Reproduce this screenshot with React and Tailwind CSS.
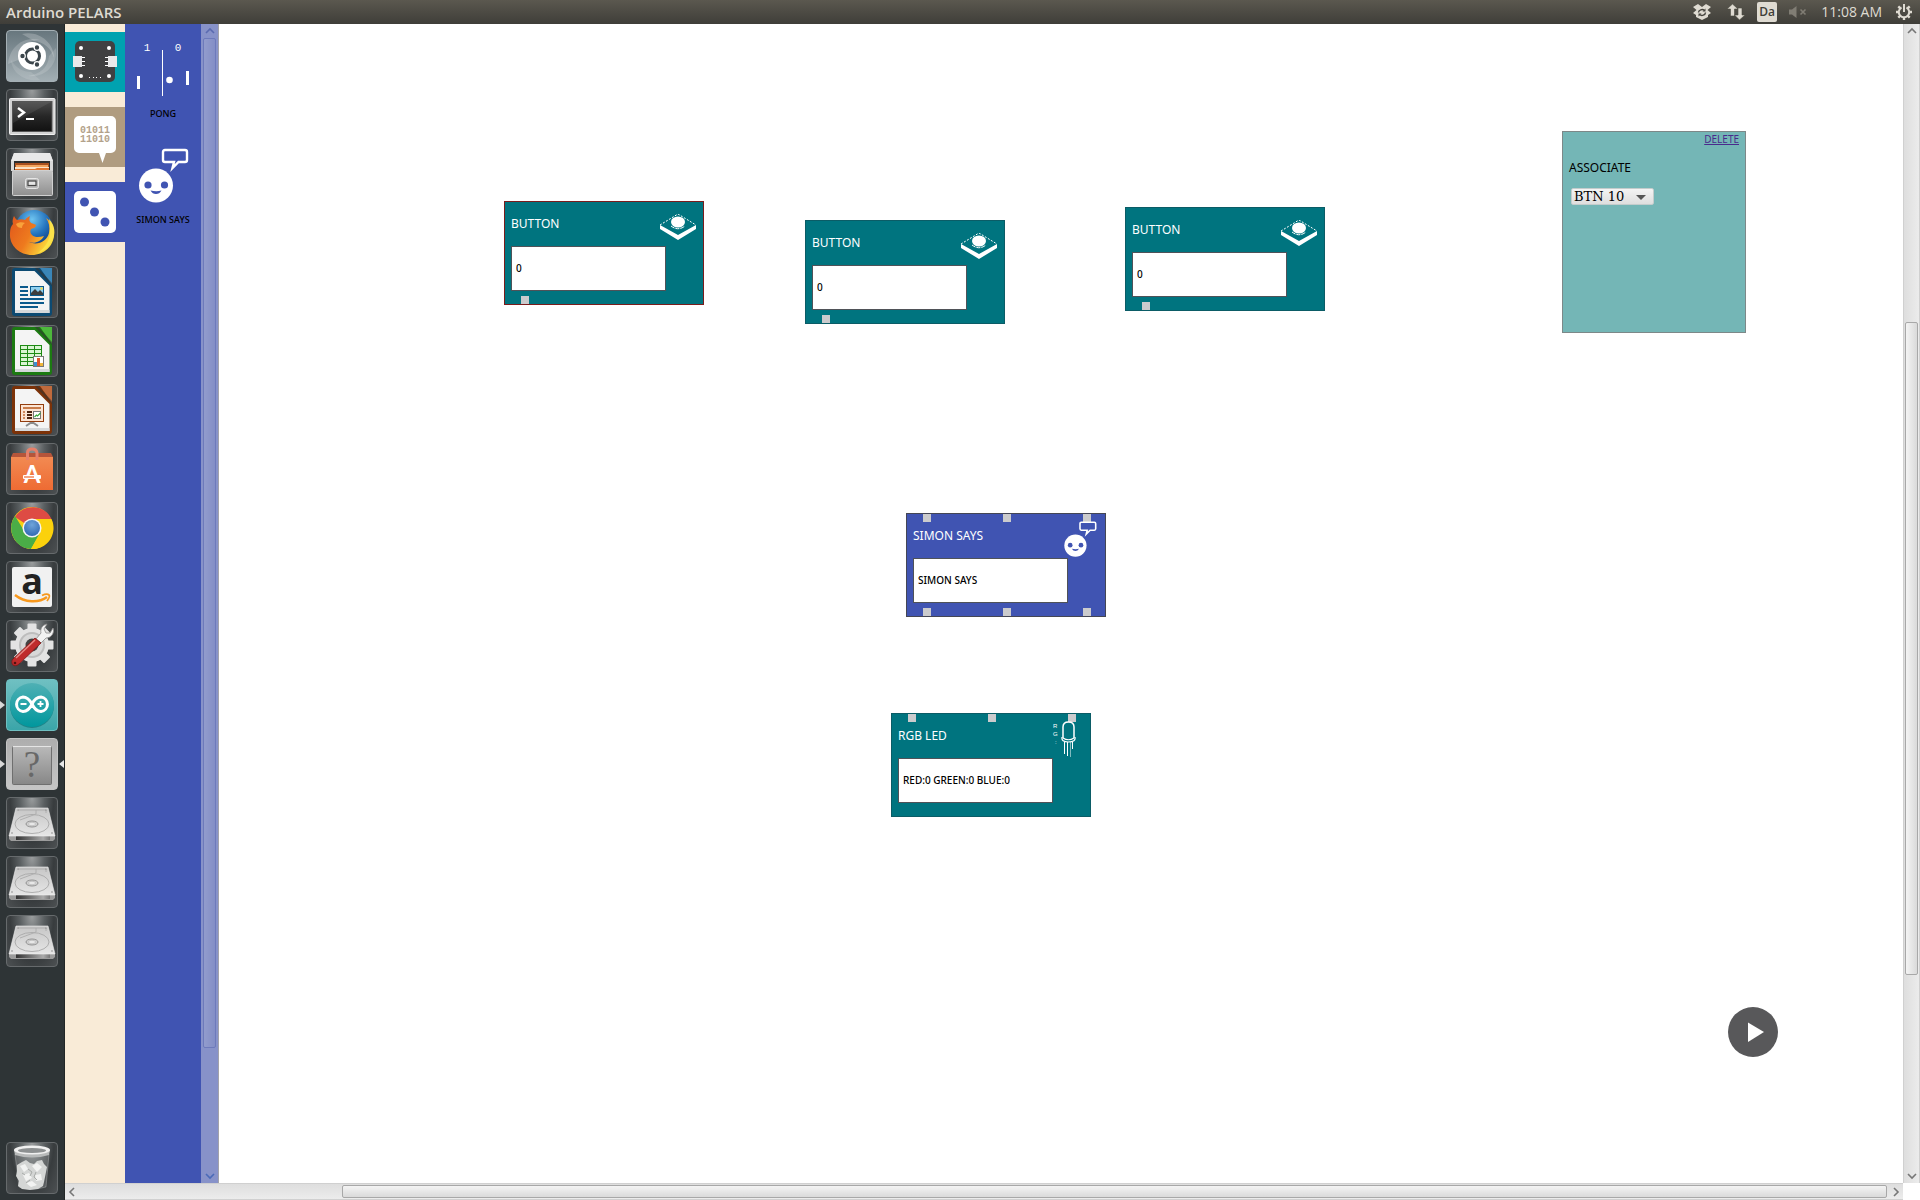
import React from "react";

/* ---------- Launcher icons (52 x 52) ---------- */

const Svg = ({ children, ...rest }) => (
  <svg viewBox="0 0 52 52" className="block h-full w-full" aria-hidden="true" {...rest}>
    {children}
  </svg>
);

const DashIcon = () => (
  <Svg>
    <path d="M2 34C4 16 18 6 34 10c-12 0-22 8-22 20" fill="#ffffff30" />
    <path d="M16 4c16-4 32 8 32 24-3-10-10-16-20-17" fill="#ffffff38" />
    <path d="M50 18c2 18-12 30-28 28 12-2 20-8 21-20" fill="#ffffff28" />
    <path d="M34 50C20 52 6 44 5 30c5 8 12 12 20 12" fill="#ffffff20" />
    <circle cx="26" cy="26" r="14" fill="#fff" />
    <circle cx="26.5" cy="26" r="7" fill="none" stroke="#3b454b" strokeWidth="3" />
    <g fill="#3b454b" stroke="#fff" strokeWidth="1.2">
      <circle cx="16.5" cy="26" r="2.8" />
      <circle cx="31" cy="17.5" r="2.8" />
      <circle cx="31" cy="34.5" r="2.8" />
    </g>
  </Svg>
);

const TerminalIcon = () => (
  <Svg>
    <defs>
      <linearGradient id="term" x1="0" y1="0" x2="0" y2="1">
        <stop offset="0" stopColor="#4a4a4a" />
        <stop offset=".5" stopColor="#262626" />
        <stop offset="1" stopColor="#111" />
      </linearGradient>
    </defs>
    <rect x="3.5" y="9.5" width="45.5" height="36" rx="1" fill="#d2d2d2" stroke="#f0f0f0" />
    <rect x="6.5" y="12.5" width="39.5" height="30" fill="url(#term)" stroke="#555" />
    <path d="M7 13h38L7 34z" fill="#ffffff14" />
    <path d="M12 19l6 4.5-6 4.5" fill="none" stroke="#fff" strokeWidth="2.4" />
    <path d="M20 30h8" stroke="#fff" strokeWidth="2" />
  </Svg>
);

const FilesIcon = () => (
  <Svg>
    <defs>
      <linearGradient id="cab" x1="0" y1="0" x2="0" y2="1">
        <stop offset="0" stopColor="#c4c4c4" />
        <stop offset="1" stopColor="#8f8f8f" />
      </linearGradient>
    </defs>
    <path d="M8 5h36l3 8v10H5V13z" fill="#d9d9d9" />
    <path d="M8 5h36l3 8H5z" fill="#e9e9e9" />
    <rect x="8" y="13" width="36" height="10" fill="#2e2e2e" />
    <path d="M9 15h34v8H9z" fill="#a8501f" />
    <path d="M10 17h32v6H10z" fill="#f3a55f" />
    <path d="M9 19h34v3H9z" fill="#fbe3c8" />
    <path d="M9 21h20l2-1h12v5H9z" fill="#e2762f" />
    <rect x="6.5" y="22.5" width="40" height="25" rx="1" fill="url(#cab)" stroke="#d0d0d0" />
    <rect x="19.5" y="30.5" width="13" height="10" rx="2" fill="#b9b9b9" stroke="#e6e6e6" />
    <rect x="22" y="33" width="8" height="4.5" fill="#e6e6e6" stroke="#444" strokeWidth="1.2" />
  </Svg>
);

const FirefoxIcon = () => (
  <Svg>
    <defs>
      <radialGradient id="globe" cx=".45" cy=".25" r=".8">
        <stop offset="0" stopColor="#6ec4f0" />
        <stop offset=".5" stopColor="#2372bd" />
        <stop offset="1" stopColor="#0c2c6e" />
      </radialGradient>
      <linearGradient id="fox" x1="0" y1="0" x2="1" y2=".5">
        <stop offset="0" stopColor="#e0561c" />
        <stop offset=".55" stopColor="#ee7a1e" />
        <stop offset="1" stopColor="#fbdc3c" />
      </linearGradient>
    </defs>
    <circle cx="28" cy="22" r="19" fill="url(#globe)" />
    <path
      d="M8 9c1 2 2 3 3 4 3-1 6-1 8 0 1-2 3-3 5-4-1 3-1 5 1 7 2 1 4 1 5 2 0 2-2 3-5 4-1 2-1 4 1 6 3 3 8 2 12 1-3 6-10 8-15 6 9 4 18-1 20-9 1-6 0-11-3-15 6 4 8 9 8 16 0 12-10 21-22 21S3 39 4 26c0-4 1-7 3-9-1-3 0-6 1-8z"
      fill="url(#fox)"
    />
    <path d="M43 12c6 6 7 15 3 22-3 6-8 10-14 12 9-7 12-14 12-22 0-4 0-8-1-12z" fill="#fbe24a" />
    <path d="M10 17c3-2 6-2 9-1-2 1-3 3-3 5-3 0-5-1-6-4z" fill="#f9a23a" />
  </Svg>
);

const DocumentIcon = ({ dark, mid, children }) => (
  <Svg>
    <path d="M9 2h37v45a3 3 0 0 1-3 3H9a3 3 0 0 1-3-3V5a3 3 0 0 1 3-3z" fill={dark} />
    <path d="M34 2h12v17z" fill={mid} />
    <path d="M29 2l17 18v-3L32 2z" fill="#333" opacity=".55" />
    <path d="M9 5h19.5L43.500 20v27H9z" fill="#f4f4f4" />
    <path d="M9 44h34.5v3H9z" fill="#d5d8da" />
    {children}
  </Svg>
);

const WriterIcon = () => (
  <DocumentIcon dark="#0c4a72" mid="#3a86b8">
    <g fill="#0b5a8c">
      <path d="M14 20h8v2h-8zM14 24h8v2h-8zM14 28h8v2h-8zM14 32h24v2H14zM14 36h24v2H14zM14 40h18v2H14z" />
    </g>
    <rect x="24.5" y="20.5" width="13" height="9" fill="#8fd0f0" stroke="#0b5a8c" />
    <path d="M25 29v-2l4-4 3 3 2-2 3 3v2z" fill="#3d3d3d" />
    <circle cx="35.5" cy="22.5" r="1.2" fill="#f5d742" />
  </DocumentIcon>
);

const CalcIcon = () => (
  <DocumentIcon dark="#1c7a12" mid="#4db83c">
    <rect x="14" y="20" width="22" height="21" fill="#1d8a14" />
    <g fill="#d9f5d2">
      <path d="M15 21h6v3h-6zM22 21h6v3h-6zM29 21h6v3h-6zM15 25h6v3h-6zM22 25h6v3h-6zM29 25h6v3h-6zM15 29h6v3h-6zM22 29h6v3h-6zM29 29h6v3h-6zM15 33h6v3h-6zM22 33h6v3h-6zM15 37h6v3h-6zM22 37h6v3h-6z" />
    </g>
    <rect x="27.5" y="31.5" width="10" height="10" fill="#fff" stroke="#777" />
    <path d="M28 37h3v4h-3z" fill="#3d8fd1" />
    <path d="M31 33h3v8h-3z" fill="#e0562c" />
    <path d="M34 38h3v3h-3z" fill="#f0b73a" />
  </DocumentIcon>
);

const ImpressIcon = () => (
  <DocumentIcon dark="#7c3208" mid="#c06a3c">
    <path d="M26 38v2M20 42l6-4 6 4" fill="none" stroke="#8b8b8b" strokeWidth="2" />
    <rect x="14.5" y="20.5" width="23" height="17" fill="#fbe4d4" stroke="#933d0e" />
    <path d="M17 23h18v2H17z" fill="#c87b4a" />
    <path d="M17 27h2v2h-2zM17 30h2v2h-2zM17 33h2v2h-2z" fill="#d08a5e" />
    <path d="M21 27h5v2h-5zM21 30h5v2h-5zM21 33h5v2h-5z" fill="#4c2410" />
    <rect x="27.5" y="27.5" width="7" height="7" fill="#fff" stroke="#777" />
    <path d="M28.5 33l2-2 1 1 3-3" fill="none" stroke="#37a53a" strokeWidth="1.2" />
  </DocumentIcon>
);

const SoftwareIcon = () => (
  <Svg>
    <defs>
      <linearGradient id="bag" x1="0" y1="0" x2="0" y2="1">
        <stop offset="0" stopColor="#f28a52" />
        <stop offset="1" stopColor="#ee6b33" />
      </linearGradient>
    </defs>
    <path d="M7 10h38l2 4H5z" fill="#b5553a" />
    <path d="M5 14h42v33H5z" fill="url(#bag)" />
    <path d="M21.5 17V10q0-4 4.500-4t5 4v7" fill="none" stroke="#e5806a" strokeWidth="3" />
    <rect x="17" y="32" width="18" height="4" rx="1" fill="#fff" />
    <text x="26" y="40" textAnchor="middle" fontSize="24" fontWeight="700" fontFamily="Lato, sans-serif" fill="#fff">A</text>
    <path d="M18 34h10" stroke="#ee6b33" strokeWidth="1.2" />
  </Svg>
);

const ChromeIcon = () => (
  <Svg>
    <defs>
      <radialGradient id="chromeBlue" cx=".5" cy=".3" r=".8">
        <stop offset="0" stopColor="#6fa4da" />
        <stop offset="1" stopColor="#2a62ad" />
      </radialGradient>
    </defs>
    <circle cx="26" cy="26" r="21" fill="#f9cf12" />
    <path d="M26 26L9 15A21 21 0 0 1 45.500 17H26z" fill="#de4b44" />
    <path d="M9 14A21 21 0 0 0 25 47l9-16-8-5-9 1z" fill="#4aad47" />
    <path d="M26 17h19.5A21 21 0 0 1 25 47l9-16z" fill="#fbd10c" />
    <circle cx="26" cy="26" r="9.5" fill="#f4f4f4" />
    <circle cx="26" cy="26" r="8" fill="url(#chromeBlue)" />
  </Svg>
);

const AmazonIcon = () => (
  <Svg>
    <rect x="6" y="6" width="40" height="40" rx="2" fill="#f1f1f1" />
    <text x="26" y="33" textAnchor="middle" fontSize="36" fontWeight="700" fontFamily="Open Sans, sans-serif" fill="#222">a</text>
    <path d="M9 34c10 8 24 8 32 2" fill="none" stroke="#f7981d" strokeWidth="2.4" />
    <path d="M36 34.5c3-1.500 6-1.500 7-.5s-.5 4-2 6" fill="none" stroke="#f7981d" strokeWidth="1.8" />
  </Svg>
);

const SettingsIcon = () => (
  <Svg>
    <g fill="#e3e3e3">
      <circle cx="26" cy="25" r="17" />
      {[0, 45, 90, 135].map((a) => (
        <rect key={a} x="21.5" y="3.5" width="9" height="43" rx="1" transform={`rotate(${a} 26 25)`} />
      ))}
    </g>
    <circle cx="26" cy="25" r="13" fill="#bdbdbd" />
    <circle cx="26" cy="25" r="11" fill="#d8d8d8" />
    <circle cx="26" cy="25" r="6.5" fill="#444" />
    <path
      d="M30 19l5-6c-1-4 1-8 6-9l-3 5 2 4 4 0 3-5c2 5-2 10-7 10l-5 5z"
      fill="#f2f2f2"
      stroke="#8a8a8a"
      strokeWidth=".8"
    />
    <path d="M29 18l6 5L13 44c-2 2-5 2-6 1s-2-4 0-6z" fill="#bf2c2c" stroke="#7c1515" strokeWidth=".8" />
    <path d="M29 20L10 38" stroke="#e58a85" strokeWidth="1.5" />
    <circle cx="9" cy="43" r="1.3" fill="#501010" />
  </Svg>
);

const ArduinoIcon = () => (
  <Svg>
    <defs>
      <linearGradient id="ard" x1="0" y1="0" x2="0" y2="1">
        <stop offset="0" stopColor="#4fb0b4" />
        <stop offset="1" stopColor="#00979d" />
      </linearGradient>
    </defs>
    <circle cx="26" cy="27" r="22" fill="#0a6a70" opacity=".6" />
    <circle cx="26" cy="26" r="22" fill="url(#ard)" />
    <path d="M26 25c-4-7-7-7-9-7a7.3 7.300 0 0 0 0 14.500c3 0 6-1 9-7.500 3-6 6-7 9-7a7.300 7.300 0 0 1 0 14.500c-3 0-6-1-9-7.500z" fill="none" stroke="#fff" strokeWidth="3" />
    <path d="M14.5 25h6M31.500 25h6M34.500 22v6" stroke="#fff" strokeWidth="1.8" />
  </Svg>
);

const UnknownIcon = () => (
  <Svg>
    <defs>
      <linearGradient id="unk" x1="0" y1="0" x2="0" y2="1">
        <stop offset="0" stopColor="#b9b9b9" />
        <stop offset="1" stopColor="#878787" />
      </linearGradient>
    </defs>
    <rect x="6.5" y="8.5" width="39" height="38" rx="1" fill="url(#unk)" stroke="#6f6f6f" />
    <path d="M7 8.5h38" stroke="#e5e5e5" />
    <text x="26" y="39" textAnchor="middle" fontSize="37" fontFamily="Liberation Serif, serif" fill="#686868">?</text>
  </Svg>
);

const DiskIcon = () => (
  <Svg>
    <defs>
      <linearGradient id="disk" x1="0" y1="0" x2="0" y2="1">
        <stop offset="0" stopColor="#c6c6c6" />
        <stop offset="1" stopColor="#e6e6e6" />
      </linearGradient>
      <linearGradient id="diskFront" x1="0" y1="0" x2="1" y2="0">
        <stop offset="0" stopColor="#333" />
        <stop offset=".8" stopColor="#aaa" />
        <stop offset="1" stopColor="#777" />
      </linearGradient>
    </defs>
    <path d="M3 38h46v4l-2 2H5l-2-2z" fill="#9c9c9c" />
    <path d="M10 39h34v4H10z" fill="url(#diskFront)" />
    <path d="M10 11h32l7 28H3z" fill="url(#disk)" stroke="#f0f0f0" strokeWidth=".6" />
    <ellipse cx="26" cy="27" rx="17" ry="9.5" fill="none" stroke="#a8a8a8" strokeWidth=".9" />
    <path d="M12 13h18v4l-16 6M30 13h10v3" fill="none" stroke="#acacac" strokeWidth=".9" />
    <ellipse cx="26" cy="27" rx="6" ry="3" fill="#d0d0d0" stroke="#8a8a8a" strokeWidth=".9" />
    <ellipse cx="26" cy="27" rx="3.5" ry="1.7" fill="#e8e8e8" stroke="#aaa" strokeWidth=".5" />
    <g fill="#777">
      <circle cx="12" cy="13" r=".6" /><circle cx="40" cy="13" r=".6" />
      <circle cx="6" cy="36" r=".7" /><circle cx="46" cy="36" r=".7" />
    </g>
  </Svg>
);

const TrashIcon = () => (
  <Svg>
    <path d="M9 12h34l-3 33q-14 4-27 0z" fill="#ffffff26" stroke="#ffffff50" strokeWidth=".8" />
    <path
      d="M11 23l5-3 4-2 4 3 4 1 3-3 5-1 2 4 3 3-1 5-1 5-1 5-1 4-5 3-8 1-8-1-4-3 1-5-3-5 1-5z"
      fill="#d4d6d5"
    />
    <path d="M14 24l5-2 3 5-4 3zM26 24l5-3 5 4-5 5zM17 33l6-2 3 5-6 3zM29 33l6-1 1 6-6 1zM20 41l6-2 5 4-6 2z" fill="#f2f3f2" />
    <path d="M22 27l4 3-2 4M30 30l-2 5 3 3M16 31l3 2M24 38l-4 3" fill="none" stroke="#a1a5a3" strokeWidth=".9" />
    <path d="M8 8l1 5q17 5 34 0l1-5z" fill="#b8baba" />
    <ellipse cx="26" cy="8" rx="18" ry="4.5" fill="#f0f0f0" />
    <ellipse cx="26" cy="8.5" rx="14" ry="2.5" fill="#8d9091" />
  </Svg>
);

const LAUNCHERS = [
  { name: "Dash", Icon: DashIcon, tone: "dash" },
  { name: "Terminal", Icon: TerminalIcon },
  { name: "Files", Icon: FilesIcon },
  { name: "Firefox", Icon: FirefoxIcon },
  { name: "Writer", Icon: WriterIcon },
  { name: "Calc", Icon: CalcIcon },
  { name: "Impress", Icon: ImpressIcon },
  { name: "Software Center", Icon: SoftwareIcon },
  { name: "Chrome", Icon: ChromeIcon },
  { name: "Amazon", Icon: AmazonIcon },
  { name: "Settings", Icon: SettingsIcon },
  { name: "Arduino", Icon: ArduinoIcon, tone: "teal", running: true },
  { name: "PELARS", Icon: UnknownIcon, tone: "light", running: true, focused: true },
  { name: "Disk 1", Icon: DiskIcon },
  { name: "Disk 2", Icon: DiskIcon },
  { name: "Disk 3", Icon: DiskIcon },
];

const TONES = {
  dash: "bg-linear-to-b from-[#68777e] to-[#a3afb4] border-[#a5b0b5]",
  teal: "bg-linear-to-b from-[#6fc0c2] to-[#3aa5a9] border-[#6fbfc1]",
  light: "bg-linear-to-b from-[#aeaeae] to-[#c6c6c6] border-[#c4c4c4]",
  dark: "bg-[radial-gradient(ellipse_at_50%_0%,#9a9d9e_0%,#5a5f61_35%,#383c3e_62%,#4d5153_100%)] border-[#666a6c]",
};

function Launcher({ name, Icon, tone = "dark", running, focused }) {
  return (
    <div className="relative px-1.5">
      <button type="button" aria-label={name} className={`block size-13 rounded border ${TONES[tone]}`}>
        <span className="-m-px block size-13">
          <Icon />
        </span>
      </button>
      {running && (
        <svg viewBox="0 0 5 8" className="absolute top-5.5 left-0 h-2 w-1.25" aria-hidden="true">
          <path d="M0 0l5 4-5 4z" fill="#d8d8d8" />
        </svg>
      )}
      {focused && (
        <svg viewBox="0 0 5 8" className="absolute top-5.5 right-0 h-2 w-1.25" aria-hidden="true">
          <path d="M5 0L0 4l5 4z" fill="#e8e8e8" />
        </svg>
      )}
    </div>
  );
}

function Dock() {
  return (
    <nav aria-label="Launcher" className="flex w-[65px] shrink-0 flex-col justify-between border-r border-[#222626] bg-[#2e3436] pt-1.5 pb-1.5">
      <div className="flex flex-col gap-[7px]">
        {LAUNCHERS.map((l) => (
          <Launcher key={l.name} {...l} />
        ))}
      </div>
      <Launcher name="Trash" Icon={TrashIcon} />
    </nav>
  );
}

/* ---------- Top bar ---------- */

function TopBar() {
  return (
    <header className="flex h-6 shrink-0 items-center justify-between bg-linear-to-b from-[#5b584f] to-[#3f3e39] pr-2 pl-1.5 font-['Open_Sans',sans-serif] text-[#dfdbd2]">
      <h1 className="text-[15px] leading-6 font-semibold">Arduino PELARS</h1>
      <div className="flex items-center">
        <button type="button" aria-label="Dropbox" className="mr-4">
          <svg viewBox="0 0 18 16" className="h-4 w-4.5" aria-hidden="true">
            <path d="M5 0l4 3 4-3 5 3-3.500 3L18 9l-3 2v2l-6 3-6-3v-2L0 9l3.500-3L0 3z" fill="#dfdbd2" />
            <path d="M5.5 8.500a3.500 3 0 0 1 6-2M12.500 8.500a3.500 3 0 0 1-6 2" fill="none" stroke="#45433d" strokeWidth="1.4" />
            <path d="M12.5 4.500v3h-3zM5.500 12.500v-3h3z" fill="#45433d" />
          </svg>
        </button>
        <button type="button" aria-label="Network" className="mr-3">
          <svg viewBox="0 0 18 16" className="h-4 w-4.5" aria-hidden="true">
            <path d="M5.5 0L11 5H7.500v7h-4V5H0zM12.500 16L7.500 11H11V4h4v7h3z" fill="#dfdbd2" stroke="#4b4942" strokeWidth=".6" />
          </svg>
        </button>
        <button type="button" aria-label="Keyboard layout" className="mr-3 size-5 rounded-xs bg-[#dfdbd2] text-xs leading-5 font-semibold text-[#3f3e39]">
          Da
        </button>
        <button type="button" aria-label="Volume" className="mr-3.5">
          <svg viewBox="0 0 18 14" className="h-3.5 w-4.5" aria-hidden="true">
            <path d="M0 4.500h3L7.500 1v12L3 9.500H0z" fill="#807d74" />
            <path d="M11.5 4.500l5 5M16.500 4.500l-5 5" stroke="#807d74" strokeWidth="1.6" />
          </svg>
        </button>
        <time className="mr-3.5 text-sm leading-6">11:08 AM</time>
        <button type="button" aria-label="Session">
          <svg viewBox="0 0 16 16" className="size-4" aria-hidden="true">
            <g stroke="#dfdbd2" strokeWidth="2.4">
              <path d="M0 8h3M13 8h3M8 13v3M2.300 2.300l2.200 2.200M13.700 2.300l-2.200 2.200M2.300 13.700l2.200-2.200M13.700 13.700l-2.200-2.200" />
            </g>
            <path d="M5.5 3.500a5.200 5.200 0 1 0 5 0" fill="none" stroke="#dfdbd2" strokeWidth="2" />
            <path d="M8 0v8" stroke="#dfdbd2" strokeWidth="2" />
          </svg>
        </button>
      </div>
    </header>
  );
}

/* ---------- Toolbox ---------- */

const BoardIcon = () => (
  <svg viewBox="0 0 60 60" className="block size-15" aria-hidden="true">
    <rect x="10" y="9" width="40" height="41" rx="5" fill="#404041" />
    <g fill="#fff">
      <circle cx="16" cy="16" r="2" /><circle cx="44" cy="16" r="2" />
      <circle cx="16" cy="44" r="2" /><circle cx="44" cy="44" r="2" />
      <path d="M17 25h3v1h-3zM17 29h3v1h-3zM17 33h3v1h-3zM40 25h3v1h-3zM40 29h3v1h-3zM40 33h3v1h-3z" />
      <path d="M24 45h1v1h-1zM28 45h1v1h-1zM31 45h1v1h-1zM35 45h1v1h-1z" />
    </g>
    <path d="M8 24h9v11H8zM43 24h9v11h-9z" fill="#e9e9ea" />
  </svg>
);

const CodeIcon = () => (
  <svg viewBox="0 0 60 60" className="block size-15" aria-hidden="true">
    <path d="M14 9h32a5 5 0 0 1 5 5v27a5 5 0 0 1-5 5h-5l-3.500 10L34 46H14a5 5 0 0 1-5-5V14a5 5 0 0 1 5-5z" fill="#fff" />
    <g fontFamily="Liberation Mono, monospace" fontSize="10" fontWeight="700" fill="#b3a28a" textAnchor="middle">
      <text x="30" y="26">01011</text>
      <text x="30" y="35">11010</text>
    </g>
  </svg>
);

const DiceIcon = () => (
  <svg viewBox="0 0 60 60" className="block size-15" aria-hidden="true">
    <rect x="9" y="9" width="42" height="42" rx="5" fill="#fff" />
    <g fill="#4054b2">
      <circle cx="19.5" cy="20" r="4.5" /><circle cx="29.5" cy="30" r="4.5" /><circle cx="40" cy="40" r="4.5" />
    </g>
  </svg>
);

const PongIcon = () => (
  <svg viewBox="0 0 60 64" className="block h-16 w-15" aria-hidden="true">
    <g fontFamily="Liberation Mono, monospace" fontSize="11" fill="#fff" textAnchor="middle">
      <text x="14" y="15">1</text>
      <text x="45" y="15">0</text>
    </g>
    <path d="M29 14h1v46h-1zM4 40h3v13H4zM53 35h3v14h-3z" fill="#fff" />
    <circle cx="36.5" cy="44" r="3.3" fill="#fff" />
  </svg>
);

const SimonIcon = ({ className, eye = "#4054b2" }) => (
  <svg viewBox="0 0 52 57" className={className} aria-hidden="true">
    <circle cx="19" cy="38.5" r="17" fill="#fff" />
    <circle cx="11" cy="38" r="3.6" fill={eye} />
    <circle cx="27.5" cy="38" r="3.6" fill={eye} />
    <path d="M13.5 43.500q6 1.500 11 0-2 3.500-5.500 3.500t-5.500-3.500z" fill={eye} />
    <path d="M28 3h20q2 0 2 2v8q0 2-2 2H41.500l-6 6 1.500-6H28q-2 0-2-2V5q0-2 2-2z" fill="none" stroke="#fff" strokeWidth="2.4" />
  </svg>
);

function Toolbox() {
  return (
    <aside className="flex shrink-0">
      <nav aria-label="Categories" className="flex w-15 flex-col gap-[15px] bg-[#f9ebd7] pt-2">
        <button type="button" aria-label="Hardware" className="bg-[#00a2b0]"><BoardIcon /></button>
        <button type="button" aria-label="Logic" className="bg-[#b09c80]"><CodeIcon /></button>
        <button type="button" aria-label="Games" className="bg-[#4054b2]"><DiceIcon /></button>
      </nav>
      <div className="flex w-19 flex-col items-center bg-[#4054b2] pt-3 font-['Noto_Sans',sans-serif] text-[9px] leading-3 font-medium text-black">
        <button type="button" className="flex flex-col items-center gap-2">
          <PongIcon />
          PONG
        </button>
        <button type="button" className="mt-[27px] flex flex-col items-center gap-2.5">
          <SimonIcon className="block h-[57px] w-13" />
          SIMON SAYS
        </button>
      </div>
      <div className="flex w-[18px] flex-col items-center border-r border-[#a3a3ab] bg-[#8792c9]">
        <Chevron dir="up" color="#5a6ab0" className="my-0.5" />
        <div className="w-[13px] grow-[1009] rounded-xs border border-[#6d7abb] bg-linear-to-r from-[#929ccd] to-[#838ec6]" />
        <div className="grow-[121]" />
        <Chevron dir="down" color="#4a6ab8" className="my-0.5" />
      </div>
    </aside>
  );
}

/* ---------- Scroll bars ---------- */

const CHEVRONS = {
  up: "M1 7l4-4 4 4",
  down: "M1 3l4 4 4-4",
  left: "M7 1L3 5l4 4",
  right: "M3 1l4 4-4 4",
};

const Chevron = ({ dir, color = "#777", className = "" }) => (
  <svg viewBox="0 0 10 10" className={`block size-2.5 shrink-0 ${className}`} aria-hidden="true">
    <path d={CHEVRONS[dir]} fill="none" stroke={color} strokeWidth="1.6" />
  </svg>
);

const VerticalScroll = () => (
  <div className="flex w-[17px] shrink-0 flex-col items-center border-x border-[#d0d0d0] bg-linear-to-r from-[#dedede] to-[#ececec]">
    <Chevron dir="up" className="mt-0.5" />
    <div className="grow-[287]" />
    <div className="w-[13px] grow-[652] rounded-xs border border-[#a8a8a8] bg-linear-to-r from-[#f4f4f4] to-[#dadada]" />
    <div className="grow-[197]" />
    <Chevron dir="down" className="mb-0.5" />
  </div>
);

const HorizontalScroll = () => (
  <div className="mr-[17px] flex h-[17px] shrink-0 items-center border-y border-[#d0d0d0] bg-linear-to-b from-[#dedede] to-[#ececec]">
    <Chevron dir="left" className="ml-0.5" />
    <div className="grow-[265]" />
    <div className="h-[13px] grow-[1545] rounded-xs border border-[#a8a8a8] bg-linear-to-b from-[#f4f4f4] to-[#dadada]" />
    <Chevron dir="right" className="mr-0.5 ml-1" />
  </div>
);

/* ---------- Canvas nodes ---------- */

const PushButtonIcon = () => (
  <svg viewBox="0 0 36 26" className="absolute top-3 right-1.75 h-6.5 w-9" aria-hidden="true">
    <path d="M0 11v4l18 11 18-11v-4L18 21z" fill="#fff" />
    <path d="M0 11L18 0l18 11" fill="none" stroke="#fff" strokeDasharray="2 1.5" />
    <ellipse cx="18" cy="8" rx="7" ry="5.5" fill="#fff" />
    <path d="M11 12q7 5.500 14 0" fill="none" stroke="#fff" strokeDasharray="4 1" />
  </svg>
);

const LedIcon = () => (
  <svg viewBox="0 0 24 36" className="absolute top-1.75 right-3.5 h-9 w-6" aria-hidden="true">
    <g fontFamily="Liberation Sans, sans-serif" fontSize="6" fill="#fff">
      <text x="1" y="7">R</text>
      <text x="1" y="15">G</text>
      <text x="3" y="23">:</text>
    </g>
    <path d="M11 17V6q0-5 5.500-5T22 6v11" fill="none" stroke="#fff" strokeWidth="1.5" />
    <path d="M10 16q-1 5 6.500 5T23 16M11 17q5.500 3.500 11 0" fill="none" stroke="#fff" strokeWidth="1.2" />
    <path d="M12.5 21v12M15.500 21v14M20.500 21v7" stroke="#fff" />
    <path d="M18.5 21v15" stroke="#ffffff80" />
  </svg>
);

const Ports = ({ count, className }) => (
  <div className={`absolute left-4 flex gap-18 ${className}`}>
    {Array.from({ length: count }, (_, i) => (
      <span key={i} className="size-2 bg-[#cbcbcd]" />
    ))}
  </div>
);

function Node({ title, value, place, tone, inputs = 0, outputs = 0, icon }) {
  const id = React.useId();
  return (
    <section className={`absolute h-26 w-50 border px-1.5 pt-3.5 ${place} ${tone}`}>
      <Ports count={inputs} className="top-0" />
      <label htmlFor={id} className="block text-xs leading-4 text-white">{title}</label>
      {icon}
      <input
        id={id}
        readOnly
        defaultValue={value}
        className="mt-3.5 block h-[45px] w-[155px] border border-[#4f5258] bg-white px-1 pb-0.5 text-[10px] font-medium text-black outline-none"
      />
      <Ports count={outputs} className="bottom-0" />
    </section>
  );
}

const TEAL = "bg-[#00747f] border-[#0b5c66]";
const TEAL_SELECTED = "bg-[#00747f] border-[#7a1c1c]";
const INDIGO = "bg-[#4054b2] border-[#444654]";

const NODES = [
  { key: "b1", title: "BUTTON", value: "0", place: "left-[285px] top-[177px]", tone: TEAL_SELECTED, outputs: 1, icon: <PushButtonIcon /> },
  { key: "b2", title: "BUTTON", value: "0", place: "left-[586px] top-[196px]", tone: TEAL, outputs: 1, icon: <PushButtonIcon /> },
  { key: "b3", title: "BUTTON", value: "0", place: "left-[906px] top-[183px]", tone: TEAL, outputs: 1, icon: <PushButtonIcon /> },
  {
    key: "s", title: "SIMON SAYS", value: "SIMON SAYS", place: "left-[687px] top-[489px]", tone: INDIGO, inputs: 3, outputs: 3,
    icon: <SimonIcon className="absolute top-1.5 right-2 h-[38px] w-[34px]" />,
  },
  { key: "r", title: "RGB LED", value: "RED:0 GREEN:0 BLUE:0", place: "left-[672px] top-[689px]", tone: TEAL, inputs: 3, icon: <LedIcon /> },
];

function AssociatePanel() {
  return (
    <section className="absolute top-[107px] left-[1343px] h-[202px] w-46 border border-[#7d8888] bg-[#74b6b6] px-1.5">
      <a href="#delete" className="block text-right text-[10px] leading-3.5 text-[#4a2a8c] underline">DELETE</a>
      <label htmlFor="associate" className="mt-3.5 block text-xs leading-4 text-black">ASSOCIATE</label>
      <div className="relative mt-3 ml-0.5 w-[83px]">
        <select
          id="associate"
          defaultValue="BTN 10"
          className="block h-[17px] w-full appearance-none rounded-xs border border-[#c4cccc] bg-linear-to-b from-[#f4f4f4] to-[#dedede] pl-0.5 font-['DejaVu_Serif',serif] text-[13px] leading-[15px] text-black"
        >
          <option>BTN 10</option>
        </select>
        <svg viewBox="0 0 10 5" className="pointer-events-none absolute top-1.75 right-2 h-1.25 w-2.5" aria-hidden="true">
          <path d="M0 0h10L5 5z" fill="#555" />
        </svg>
      </div>
    </section>
  );
}

function Canvas() {
  return (
    <main className="relative grow overflow-hidden bg-white font-['Noto_Sans',sans-serif]">
      {NODES.map(({ key, ...n }) => (
        <Node key={key} {...n} />
      ))}
      <AssociatePanel />
      <button type="button" aria-label="Run" className="absolute right-[125px] bottom-[126px] size-[50px] rounded-full bg-[#58585a]">
        <svg viewBox="0 0 50 50" className="block size-full" aria-hidden="true">
          <path d="M20 15.500l16 9.500L20 35z" fill="#fff" />
        </svg>
      </button>
    </main>
  );
}

export default function App() {
  return (
    <div className="flex h-screen flex-col overflow-hidden bg-white">
      <TopBar />
      <div className="flex min-h-0 grow">
        <Dock />
        <div className="flex min-w-0 grow flex-col">
          <div className="flex min-h-0 grow">
            <Toolbox />
            <Canvas />
            <VerticalScroll />
          </div>
          <HorizontalScroll />
        </div>
      </div>
    </div>
  );
}
